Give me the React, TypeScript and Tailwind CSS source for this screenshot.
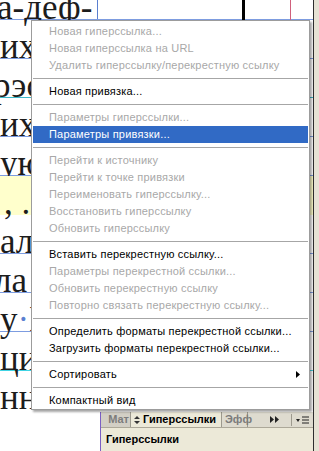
import React from "react";

type Item =
  | { label: string; disabled?: boolean; selected?: boolean; submenu?: boolean }
  | "sep";

const menu: Item[] = [
  { label: "Новая гиперссылка...", disabled: true },
  { label: "Новая гиперссылка на URL", disabled: true },
  { label: "Удалить гиперссылку/перекрестную ссылку", disabled: true },
  "sep",
  { label: "Новая привязка..." },
  "sep",
  { label: "Параметры гиперссылки...", disabled: true },
  { label: "Параметры привязки...", selected: true },
  "sep",
  { label: "Перейти к источнику", disabled: true },
  { label: "Перейти к точке привязки", disabled: true },
  { label: "Переименовать гиперссылку...", disabled: true },
  { label: "Восстановить гиперссылку", disabled: true },
  { label: "Обновить гиперссылку", disabled: true },
  "sep",
  { label: "Вставить перекрестную ссылку..." },
  { label: "Параметры перекрестной ссылки...", disabled: true },
  { label: "Обновить перекрестную ссылку", disabled: true },
  { label: "Повторно связать перекрестную ссылку...", disabled: true },
  "sep",
  { label: "Определить форматы перекрестной ссылки..." },
  { label: "Загрузить форматы перекрестной ссылки..." },
  "sep",
  { label: "Сортировать", submenu: true },
  "sep",
  { label: "Компактный вид" },
];

const line =
  "h-[39px] shrink-0 whitespace-nowrap border-b text-[35px] leading-[53px] text-[#1c1c1c]";

function ContextMenu() {
  return (
    <div className="absolute left-[31px] top-[20px] z-20 w-[279px] border border-[#9c9c9c] bg-white px-px pt-[2px] shadow-[2px_2px_2px_rgba(0,0,0,0.35)] font-['Liberation_Sans',sans-serif] text-[11px]">
      {menu.map((it, i) =>
        it === "sep" ? (
          <div key={i} className="flex h-[9px] items-center">
            <div className="h-px w-full bg-[#a6a6a6]" />
          </div>
        ) : (
          <div
            key={i}
            className={
              "flex h-[17px] items-center pl-[16px] pr-[8px] tracking-[0.2px] " +
              (it.selected
                ? "bg-[#316ac5] text-white"
                : it.disabled
                ? "text-[#a8a8a8]"
                : "text-black")
            }
          >
            <span className="flex-1 whitespace-nowrap">{it.label}</span>
            {it.submenu && (
              <svg width="4" height="7" viewBox="0 0 4 7">
                <path d="M0 0 L4 3.5 L0 7 Z" fill="#000" />
              </svg>
            )}
          </div>
        )
      )}
    </div>
  );
}

function Panel() {
  return (
    <div className="absolute left-[100px] top-[412px] z-10 flex h-[39px] w-[213px] flex-col border-l border-[#7b5fc4] bg-[#ece9d8] font-['Liberation_Sans',sans-serif] text-[11px]">
      <div className="flex h-[16px] items-stretch border-b border-[#aca899] bg-[#dedbcf]">
        <div className="flex w-[30px] items-center justify-end border-r border-[#9d9a8e] bg-[#d2cfc5] pr-[1px] font-bold text-[#7c7c7c]">
          Мат
        </div>
        <div className="flex w-[90px] items-center gap-[3px] bg-[#ece9d8] pl-[3px] font-bold text-black">
          <svg width="6" height="8" viewBox="0 0 6 8">
            <path d="M3 0 L6 3 L0 3 Z M0 5 L6 5 L3 8 Z" fill="#333" />
          </svg>
          Гиперссылки
        </div>
        <div className="flex w-[27px] items-center border-x border-[#9d9a8e] pl-[3px] font-bold text-[#7c7c7c]">
          Эфф
        </div>
        <div className="flex flex-1 items-center justify-end gap-[4px] pr-[4px]">
          <svg width="9" height="7" viewBox="0 0 9 7">
            <path d="M0 0 L4 3.5 L0 7 Z M5 0 L9 3.5 L5 7 Z" fill="#222" />
          </svg>
          <div className="ml-[8px] h-[12px] w-px bg-[#9d9a8e]" />
          <svg width="13" height="8" viewBox="0 0 13 8">
            <path d="M0 3 L4 3 L2 6 Z" fill="#222" />
            <path d="M6 1 H13 M6 4 H13 M6 7 H13" stroke="#222" strokeWidth="1" />
          </svg>
        </div>
      </div>
      <div className="pl-[5px] pt-[3px] font-bold text-black">Гиперссылки</div>
    </div>
  );
}

export default function App() {
  return (
    <div className="flex h-[451px] w-[319px] overflow-hidden bg-white">
      <div className="relative h-full w-[313px] overflow-hidden">
        <div className="-mt-[19px] flex flex-col font-['Liberation_Serif',serif]">
          <div className={line + " border-[#7d9ce0]"}>
            <span className="-ml-[3px] inline-block w-[248px] border-r-[3px] border-black">а-деф-</span>
          </div>
          <div className={line + " border-[#7d9ce0]"}>
            их<span className="text-[#5a7fd0]">·</span> бумаги
          </div>
          <div className={line + " border-[#3cb8c8]"}>
            <span className="-ml-[7px]">рэс</span>
          </div>
          <div className={line + " border-[#7d9ce0]"}>их</div>
          <div className={line + " border-[#7d9ce0]"}>ую</div>
          <div className={line + " border-transparent bg-[#ffffcc] text-[28px]"}>
            <span className="pl-[4px]">, . (</span>
          </div>
          <div className={line + " border-[#7d9ce0]"}>ал</div>
          <div className={line + " border-[#7d9ce0]"}>
            <span className="-ml-[6px]">ла</span>
          </div>
          <div className={line + " border-[#7d9ce0]"}>
            у<span className="text-[#5a7fd0]">·</span>Г
          </div>
          <div className={line + " border-[#40d4e4]"}>ци</div>
          <div className={line + " border-transparent"}>нными</div>
        </div>
        {/* frame edges */}
        <div className="absolute left-[97px] top-0 h-[19px] w-px bg-[#5a7fd0]" />
        <div className="absolute left-[290px] top-0 h-[20px] w-px bg-[#d0607c]" />
      </div>
      <div className="h-full w-px bg-[#2e2e2e]" />
      <div className="h-full flex-1 bg-[#e6e2d4]" />
      <ContextMenu />
      <Panel />
    </div>
  );
}
